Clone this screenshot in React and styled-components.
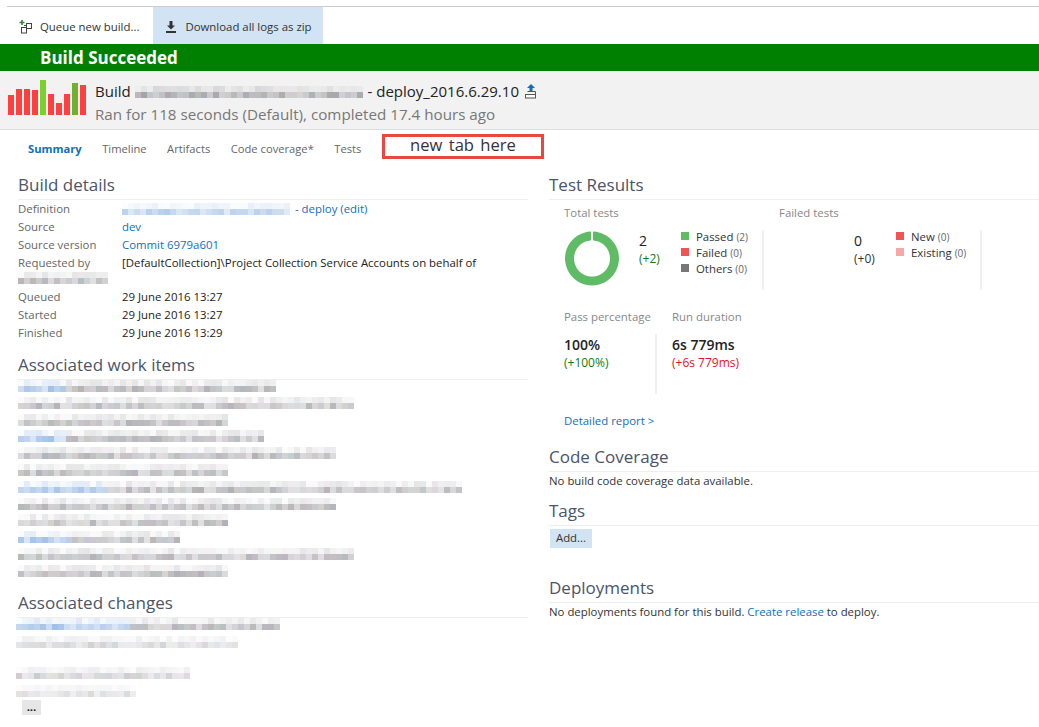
import React from "react";
import styled, { createGlobalStyle } from "styled-components";

const GlobalStyle = createGlobalStyle`
  html, body {
    margin: 0;
    padding: 0;
    background: #fff;
    font-family: "Open Sans", "Liberation Sans", sans-serif;
    font-size: 11.4px;
    color: #222;
  }
`;

const Page = styled.div`
  position: relative;
  width: 1039px;
  height: 727px;
  overflow: hidden;
`;

const TopRule = styled.div`
  height: 1px;
  margin: 6px 0 0 7px;
  background: #ccc;
`;

const Toolbar = styled.div`
  display: flex;
  height: 37px;
`;

const ToolButton = styled.div`
  display: flex;
  align-items: center;
  gap: ${(p) => (p.$active ? "8px" : "7px")};
  padding: ${(p) => (p.$active ? "2px 11px 0 12px" : "2px 14px 0 19px")};
  background: ${(p) => (p.$active ? "#d2e3f3" : "transparent")};
  color: #333;
`;

const Banner = styled.div`
  height: 27px;
  padding-left: 40px;
  background: #008000;
  color: #fff;
  font-size: 17px;
  font-weight: 700;
  line-height: 27px;
`;

const BuildHeader = styled.div`
  display: flex;
  align-items: center;
  gap: 9px;
  height: 59px;
  padding-left: 8px;
  background: #f2f2f2;
  border-bottom: 1px solid #ddd;
  box-sizing: border-box;
`;

const BarChart = styled.div`
  display: flex;
  align-items: flex-end;
  gap: 2px;
  height: 35px;
  margin-bottom: 5px;
`;

const Bar = styled.div`
  width: 6px;
  height: ${(p) => p.$h}px;
  background: ${(p) => p.$color};
`;

const HeaderText = styled.div`
  display: flex;
  flex-direction: column;
  gap: 2px;
  margin-top: 6px;
`;

const HeaderTitle = styled.div`
  display: flex;
  align-items: center;
  height: 20px;
  font-size: 15px;
  color: #222;
`;

const HeaderSub = styled.div`
  height: 22px;
  font-size: 15.2px;
  line-height: 22px;
  color: #777;
`;

const Tabs = styled.div`
  display: flex;
  align-items: center;
  height: 41px;
  padding: 0 0 5px 28px;
  box-sizing: border-box;
`;

const Tab = styled.div`
  margin-right: 20.5px;
  color: ${(p) => (p.$active ? "#106ebe" : "#666")};
  font-size: 11.2px;
  font-weight: ${(p) => (p.$active ? 700 : 400)};
`;

const Callout = styled.div`
  position: absolute;
  left: 382px;
  top: 134px;
  width: 162px;
  height: 25px;
  box-sizing: border-box;
  border: 3px solid #e8483f;
  color: #333;
  font-size: 16.6px;
  line-height: 16px;
  text-align: center;
  word-spacing: 2px;
`;

const Columns = styled.div`
  display: flex;
  gap: 21px;
`;

const LeftColumn = styled.div`
  width: 510px;
  margin-left: 18px;
  flex: none;
`;

const RightColumn = styled.div`
  flex: 1;
`;

const SectionTitle = styled.h2`
  height: 28px;
  margin: ${(p) => p.$top || 0}px 0 0;
  border-bottom: 1px solid #eee;
  color: #4b5468;
  font-size: 17px;
  font-weight: 400;
  line-height: 28px;
`;

const DetailRow = styled.div`
  display: flex;
  height: 18px;
  line-height: 18px;
  white-space: nowrap;
`;

const DetailLabel = styled.div`
  width: 104px;
  flex: none;
  color: #666;
`;

const DetailValue = styled.div`
  display: flex;
  align-items: center;
  color: #222;
`;

const Link = styled.span`
  color: #106ebe;
`;

const SmearGrid = styled.div`
  display: grid;
  grid-template-columns: repeat(${(p) => p.$cols}, 6px);
  grid-auto-rows: 6px;
  flex: none;
  margin: ${(p) => p.$margin || "0"};
`;

const SmearCell = styled.span`
  display: block;
`;

const SmearList = styled.div`
  display: flex;
  flex-direction: column;
  gap: ${(p) => p.$gap}px;
  margin-left: ${(p) => p.$shift || 0}px;
`;

const Gap = styled.div`
  height: ${(p) => p.$h}px;
`;

const MoreButton = styled.div`
  width: 19px;
  height: 15px;
  margin: 3px 0 0 4px;
  background: #e6e6e6;
  color: #222;
  font-weight: 700;
  line-height: 14px;
  text-align: center;
`;

const TestPanel = styled.div`
  padding-left: 15px;
`;

const GroupRow = styled.div`
  display: flex;
`;

const Group = styled.div`
  width: ${(p) => p.$width}px;
  margin-right: 15px;
  flex: none;
`;

const GroupLabel = styled.div`
  height: 18px;
  margin-top: 4px;
  color: #888;
  line-height: 18px;
`;

const ChartRow = styled.div`
  display: flex;
  height: 60px;
  margin-top: 8px;
  border-right: 2px solid #f0f0f0;
`;

const DonutSlot = styled.div`
  width: 75px;
  flex: none;
`;

const Figure = styled.div`
  width: 42px;
  flex: none;
`;

const FigureValue = styled.div`
  height: 22px;
  font-size: 14px;
  line-height: 22px;
  color: #222;
`;

const Delta = styled.div`
  height: 18px;
  margin-top: -2px;
  font-size: 12px;
  line-height: 18px;
  color: ${(p) => p.$color};
`;

const Legend = styled.div`
  flex: 1;
  margin-top: -2px;
`;

const LegendRow = styled.div`
  display: flex;
  align-items: center;
  gap: 7px;
  height: 16px;
  color: #333;
`;

const Swatch = styled.span`
  width: 8px;
  height: 8px;
  background: ${(p) => p.$color};
`;

const Count = styled.span`
  color: #666;
  font-size: 10px;
`;

const MetricLabels = styled.div`
  display: flex;
  height: 18px;
  margin-top: 18px;
  color: #888;
  line-height: 18px;
`;

const MetricLabel = styled.div`
  width: ${(p) => p.$width}px;
  flex: none;
`;

const MetricRow = styled.div`
  display: flex;
  height: 60px;
  margin-top: 8px;
`;

const Metric = styled.div`
  width: ${(p) => p.$width}px;
  flex: none;
  box-sizing: border-box;
  border-right: ${(p) => (p.$divider ? "2px solid #f0f0f0" : "none")};
`;

const MetricValue = styled.div`
  height: 22px;
  font-size: 14px;
  font-weight: 600;
  line-height: 22px;
  color: #222;
`;

const ReportLink = styled(Link)`
  display: block;
  height: 18px;
  margin-top: 18px;
  line-height: 18px;
`;

const PlainText = styled.div`
  height: 18px;
  line-height: 18px;
  color: #333;
`;

const AddButton = styled.div`
  width: 42px;
  height: 19px;
  margin: 3px 0 0 1px;
  background: #d2e3f3;
  color: #333;
  line-height: 18px;
  text-align: center;
`;

// seeded so the blurred text looks the same on every load
function makeRandom(seed) {
  let s = seed;
  return () => {
    s = (s * 16807) % 2147483647;
    return s / 2147483647;
  };
}

function Smear({ width, blue = 0, strength = 1, tone = "grey", seed = 7, rows = 2, margin }) {
  const cols = Math.round(width / 6);
  const blueCols = Math.round(blue / 6);
  const rand = makeRandom(seed * 137 + width);
  const cells = [];
  for (let r = 0; r < rows; r++) {
    for (let c = 0; c < cols; c++) {
      const weight = r === rows - 1 ? 0.2 + rand() * 0.3 : 0.03 + rand() * 0.14;
      const alpha = (weight * strength).toFixed(2);
      const isBlue = tone === "blue" || c < blueCols;
      const bg = isBlue
        ? `rgba(70, 130, 205, ${alpha})`
        : `rgba(${95 + Math.round(rand() * 25)}, ${95 + Math.round(rand() * 20)}, ${100 + Math.round(rand() * 25)}, ${alpha})`;
      cells.push(<SmearCell key={`${r}-${c}`} style={{ background: bg }} />);
    }
  }
  return (
    <SmearGrid $cols={cols} $margin={margin}>
      {cells}
    </SmearGrid>
  );
}

const QueueIcon = () => (
  <svg width="14" height="14" viewBox="0 0 14 14">
    <path d="M3 0v5M.5 2.500h5" stroke="#2d8a2d" strokeWidth="1.600" fill="none" />
    <rect x="7.500" y="3.500" width="5" height="5" fill="none" stroke="#444" />
    <rect x="2.500" y="7.500" width="5" height="5.500" fill="#fff" stroke="#444" />
    <path d="M5 5.500h2.500" stroke="#444" fill="none" />
  </svg>
);

const DownloadIcon = () => (
  <svg width="12" height="14" viewBox="0 0 12 14">
    <path d="M4.500 1h3v4.500h2.500L6 9.500 2 5.500h2.500z" fill="#333" />
    <rect x="1" y="11" width="10" height="2" fill="#333" />
  </svg>
);

const RetainIcon = () => (
  <svg width="14" height="15" viewBox="0 0 14 15" style={{ marginLeft: 5 }}>
    <path d="M7 0l4 4H8.500v3h-3V4H3z" fill="#106ebe" />
    <path d="M3.500 7.500h8v3" fill="none" stroke="#555" />
    <rect x="1.500" y="10.500" width="10" height="3.500" fill="#fff" stroke="#555" />
  </svg>
);

const Donut = () => (
  <svg width="56" height="56" viewBox="0 0 56 56">
    <path
      d="M29 1.500 A27 27 0 1 1 27 1.500 L27 10.500 A18 18 0 1 0 29 10.500 Z"
      fill="#60bb66"
    />
  </svg>
);

const bars = [
  [20, "#ff4040"], [26, "#ff4040"], [26, "#ff4040"], [25, "#ff4040"], [35, "#7bd030"],
  [21, "#ff4040"], [12, "#ff4040"], [21, "#ff4040"], [32, "#70b030"], [30, "#ff4040"],
];

const workItems = [
  [255, 50], [337, 0], [212, 0], [247, 50], [320, 0], [212, 0],
  [445, 87], [320, 0], [207, 0], [162, 52], [337, 0], [212, 0],
];

export default function App() {
  return (
    <Page>
      <GlobalStyle />
      <TopRule />
      <Toolbar>
        <ToolButton>
          <QueueIcon />
          Queue new build...
        </ToolButton>
        <ToolButton $active>
          <DownloadIcon />
          Download all logs as zip
        </ToolButton>
      </Toolbar>
      <Banner>Build Succeeded</Banner>
      <BuildHeader>
        <BarChart>
          {bars.map(([h, color], i) => (
            <Bar key={i} $h={h} $color={color} />
          ))}
        </BarChart>
        <HeaderText>
          <HeaderTitle>
            Build&nbsp;
            <Smear width={228} seed={3} strength={1.1} margin="2px 5px 0 0" />
            - deploy_2016.6.29.10
            <RetainIcon />
          </HeaderTitle>
          <HeaderSub>Ran for 118 seconds (Default), completed 17.4 hours ago</HeaderSub>
        </HeaderText>
      </BuildHeader>
      <Tabs>
        <Tab $active>Summary</Tab>
        <Tab>Timeline</Tab>
        <Tab>Artifacts</Tab>
        <Tab>Code coverage*</Tab>
        <Tab>Tests</Tab>
      </Tabs>
      <Callout>new tab here</Callout>
      <Columns>
        <LeftColumn>
          <SectionTitle>Build details</SectionTitle>
          <DetailRow>
            <DetailLabel>Definition</DetailLabel>
            <DetailValue>
              <Smear width={168} tone="blue" seed={5} strength={0.8} margin="0 2px 0 0" />
              <Link>&nbsp;- deploy (edit)</Link>
            </DetailValue>
          </DetailRow>
          <DetailRow>
            <DetailLabel>Source</DetailLabel>
            <DetailValue><Link>dev</Link></DetailValue>
          </DetailRow>
          <DetailRow>
            <DetailLabel>Source version</DetailLabel>
            <DetailValue><Link>Commit 6979a601</Link></DetailValue>
          </DetailRow>
          <DetailRow>
            <DetailLabel>Requested by</DetailLabel>
            <DetailValue>[DefaultCollection]\Project Collection Service Accounts on behalf of</DetailValue>
          </DetailRow>
          <Smear width={90} seed={9} margin="0 0 4px" />
          <DetailRow>
            <DetailLabel>Queued</DetailLabel>
            <DetailValue>29 June 2016 13:27</DetailValue>
          </DetailRow>
          <DetailRow>
            <DetailLabel>Started</DetailLabel>
            <DetailValue>29 June 2016 13:27</DetailValue>
          </DetailRow>
          <DetailRow>
            <DetailLabel>Finished</DetailLabel>
            <DetailValue>29 June 2016 13:29</DetailValue>
          </DetailRow>

          <SectionTitle $top={9}>Associated work items</SectionTitle>
          <SmearList $gap={4.8}>
            {workItems.map(([width, blue], i) => (
              <Smear key={i} width={width} blue={blue} seed={i + 11} />
            ))}
          </SmearList>

          <SectionTitle $top={12}>Associated changes</SectionTitle>
          <SmearList $gap={6} $shift={-2}>
            <Smear width={264} blue={112} seed={31} />
            <Smear width={222} seed={32} strength={0.6} />
            <Gap $h={7} />
            <Smear width={172} seed={33} strength={0.7} />
            <Smear width={118} seed={34} strength={0.5} />
          </SmearList>
          <MoreButton>...</MoreButton>
        </LeftColumn>

        <RightColumn>
          <SectionTitle>Test Results</SectionTitle>
          <TestPanel>
            <GroupRow>
              <Group $width={200}>
                <GroupLabel>Total tests</GroupLabel>
                <ChartRow>
                  <DonutSlot><Donut /></DonutSlot>
                  <Figure>
                    <FigureValue>2</FigureValue>
                    <Delta $color="#107c10">(+2)</Delta>
                  </Figure>
                  <Legend>
                    <LegendRow><Swatch $color="#60bb66" /><span>Passed <Count>(2)</Count></span></LegendRow>
                    <LegendRow><Swatch $color="#f05555" /><span>Failed <Count>(0)</Count></span></LegendRow>
                    <LegendRow><Swatch $color="#777" /><span>Others <Count>(0)</Count></span></LegendRow>
                  </Legend>
                </ChartRow>
              </Group>
              <Group $width={203}>
                <GroupLabel>Failed tests</GroupLabel>
                <ChartRow>
                  <DonutSlot />
                  <Figure>
                    <FigureValue>0</FigureValue>
                    <Delta $color="#333">(+0)</Delta>
                  </Figure>
                  <Legend>
                    <LegendRow><Swatch $color="#f05555" /><span>New <Count>(0)</Count></span></LegendRow>
                    <LegendRow><Swatch $color="#f6a8a8" /><span>Existing <Count>(0)</Count></span></LegendRow>
                  </Legend>
                </ChartRow>
              </Group>
            </GroupRow>
            <MetricLabels>
              <MetricLabel $width={108}>Pass percentage</MetricLabel>
              <MetricLabel>Run duration</MetricLabel>
            </MetricLabels>
            <MetricRow>
              <Metric $width={93} $divider>
                <MetricValue>100%</MetricValue>
                <Delta $color="#107c10">(+100%)</Delta>
              </Metric>
              <Metric $width={15} />
              <Metric $width={120}>
                <MetricValue>6s 779ms</MetricValue>
                <Delta $color="#e81123">(+6s 779ms)</Delta>
              </Metric>
            </MetricRow>
            <ReportLink>Detailed report &gt;</ReportLink>
          </TestPanel>

          <SectionTitle $top={13}>Code Coverage</SectionTitle>
          <PlainText>No build code coverage data available.</PlainText>

          <SectionTitle $top={7}>Tags</SectionTitle>
          <AddButton>Add...</AddButton>

          <SectionTitle $top={26}>Deployments</SectionTitle>
          <PlainText>
            No deployments found for this build. <Link>Create release</Link> to deploy.
          </PlainText>
        </RightColumn>
      </Columns>
    </Page>
  );
}
